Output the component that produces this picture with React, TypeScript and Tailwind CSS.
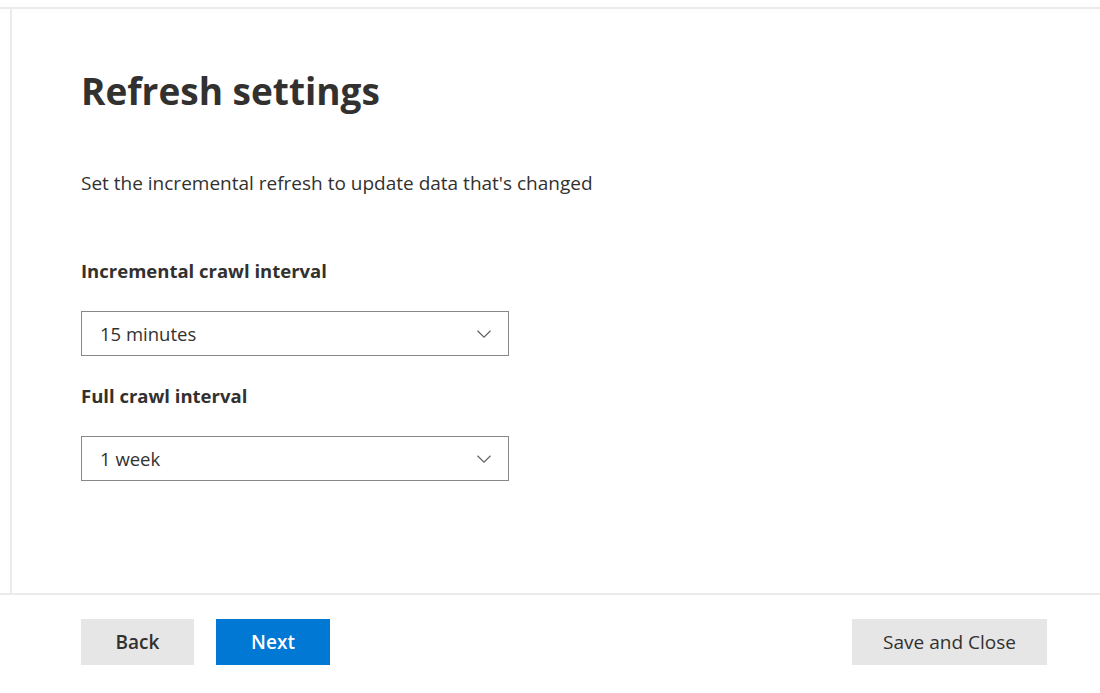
import React from 'react';

const Chevron = () => (
  <svg width="16" height="16" viewBox="0 0 16 16" fill="none" className="text-[#605e5c]">
    <path d="M1.5 4.75 8 11.25l6.5-6.5" stroke="currentColor" strokeWidth="1.1" />
  </svg>
);

const Dropdown = ({ value }: { value: string }) => (
  <div className="flex h-[45px] w-[428px] items-center justify-between border border-[#8a8886] pl-[18px] pr-[16px] text-[18.5px] text-[#323130]">
    <span>{value}</span>
    <Chevron />
  </div>
);

const App: React.FC = () => {
  return (
    <div className="h-[693px] w-[1100px] overflow-hidden bg-white text-[#323130]" style={{ fontFamily: '"Open Sans", "Noto Sans", sans-serif' }}>
      <div className="mt-[7px] border-t-2 border-[#edebe9]">
        <div className="ml-[10px] h-[584px] border-l-2 border-[#edebe9] pl-[69px]">
          <h1 className="pt-[57px] text-[37px] font-bold leading-[50px]">Refresh settings</h1>
          <p className="mt-[54px] text-[19px] leading-[26px]">Set the incremental refresh to update data that's changed</p>
          <label className="mt-[62px] block text-[18.5px] font-bold leading-[26px]">Incremental crawl interval</label>
          <div className="mt-[27px]">
            <Dropdown value="15 minutes" />
          </div>
          <label className="mt-[27px] block text-[18.5px] font-bold leading-[26px]">Full crawl interval</label>
          <div className="mt-[27px]">
            <Dropdown value="1 week" />
          </div>
        </div>
      </div>
      <div className="flex items-start justify-between border-t-2 border-[#edebe9] pl-[81px] pr-[53px] pt-[24px]">
        <div className="flex gap-[22px]">
          <button className="h-[46px] w-[113px] bg-[#e6e6e6] text-[19px] font-semibold text-[#323130]">Back</button>
          <button className="h-[46px] w-[114px] bg-[#0078d4] text-[19px] font-semibold text-white">Next</button>
        </div>
        <button className="h-[46px] w-[195px] bg-[#e6e6e6] text-[19px] text-[#323130]">Save and Close</button>
      </div>
    </div>
  );
};

export default App;
